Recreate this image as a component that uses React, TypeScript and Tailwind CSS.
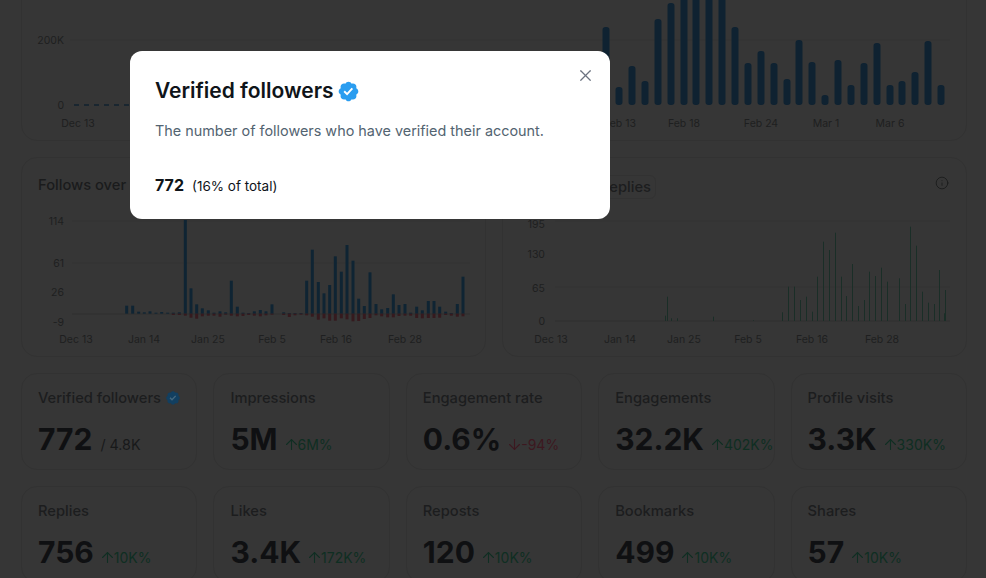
import { ArrowDown, ArrowUp, Info, X } from 'lucide-react'

const FONT = 'font-["Inter","Liberation_Sans",sans-serif]'

const overviewBars: [number, number][] = [
  [606, 27], [619, 87], [632, 66], [645, 81], [658, 19], [671, 3], [684, -10], [696, -10], [709, -10], [722, -10],
  [735, 27], [748, 63], [761, 51], [774, 63], [787, 79], [799, 40], [812, 62], [825, 95], [838, 60], [851, 85],
  [864, 63], [877, 43], [890, 85], [902, 81], [915, 72], [928, 41], [941, 85],
]

// x, top of blue bar, bottom of red bar (3x zoomed units)
const followBars: [number, number, number][] = [
  [380, 467, 491], [398, 467, 491], [416, 485, 491], [433, 487, 491], [450, 484, 491], [468, 488, 491], [485, 486, 491],
  [503, 488, 491], [520, 488, 495], [538, 487, 495], [556, 210, 497], [573, 415, 503], [590, 463, 506], [607, 475, 499],
  [625, 481, 497], [642, 488, 497], [660, 484, 500], [677, 487, 494], [694, 392, 497], [712, 470, 499], [729, 488, 498],
  [746, 489, 495], [763, 484, 497], [781, 480, 499], [798, 484, 496], [816, 463, 494], [851, 487, 495], [868, 489, 501],
  [885, 489, 496], [903, 489, 494], [920, 392, 496], [937, 299, 500], [955, 396, 509], [972, 430, 505], [989, 405, 512],
  [1006, 319, 512], [1024, 365, 505], [1041, 285, 508], [1059, 332, 514], [1076, 446, 513], [1093, 468, 507], [1110, 367, 504],
  [1128, 462, 496], [1145, 478, 499], [1163, 474, 502], [1180, 433, 502], [1197, 465, 498], [1215, 462, 497], [1232, 488, 497],
  [1250, 470, 504], [1267, 481, 505], [1285, 453, 504], [1302, 453, 504], [1319, 470, 503], [1337, 485, 495], [1354, 489, 497],
  [1372, 462, 500], [1389, 380, 499],
]

const replyBars: [number, number][] = [
  [510, 497], [515, 440], [527, 505], [547, 505], [654, 500], [774, 511], [862, 487], [880, 410], [897, 410], [915, 450],
  [932, 440], [950, 485], [967, 380], [984, 275], [1002, 300], [1019, 248], [1037, 380], [1054, 438], [1072, 342], [1089, 468],
  [1106, 450], [1123, 365], [1141, 378], [1159, 353], [1176, 395], [1211, 385], [1229, 462], [1246, 230], [1263, 287], [1281, 425],
  [1298, 458], [1316, 462], [1333, 360], [1346, 490], [1351, 420],
]

const statsTop = [
  { label: 'Verified followers', value: '772', total: '/ 4.8K', badge: true },
  { label: 'Impressions', value: '5M', delta: '6M%' },
  { label: 'Engagement rate', value: '0.6%', delta: '-94%', down: true },
  { label: 'Engagements', value: '32.2K', delta: '402K%' },
  { label: 'Profile visits', value: '3.3K', delta: '330K%' },
]

const statsBottom = [
  { label: 'Replies', value: '756', delta: '10K%' },
  { label: 'Likes', value: '3.4K', delta: '172K%' },
  { label: 'Reposts', value: '120', delta: '10K%' },
  { label: 'Bookmarks', value: '499', delta: '10K%' },
  { label: 'Shares', value: '57', delta: '10K%' },
]

function Badge({ size, color, check }: { size: number; color: string; check: string }) {
  return (
    <svg width={size} height={size} viewBox="0 0 24 24" className="shrink-0">
      <circle cx="12" cy="12" r="7" fill={check} />
      <path
        fill={color}
        fillRule="evenodd"
        d="M22.25 12c0-1.43-.88-2.67-2.19-3.34.46-1.39.2-2.9-.81-3.91s-2.52-1.27-3.91-.81c-.66-1.31-1.91-2.19-3.34-2.19s-2.67.88-3.33 2.19c-1.4-.46-2.91-.2-3.92.81s-1.26 2.52-.8 3.91c-1.31.67-2.2 1.91-2.2 3.34s.89 2.67 2.2 3.34c-.46 1.39-.21 2.9.8 3.91s2.52 1.26 3.91.81c.67 1.31 1.91 2.19 3.34 2.19s2.68-.88 3.34-2.19c1.39.45 2.9.2 3.91-.81s1.27-2.52.81-3.91c1.31-.67 2.19-1.91 2.19-3.34zm-11.71 4.2L6.8 12.46l1.41-1.42 2.26 2.26 4.8-5.23 1.47 1.36-6.2 6.77z"
      />
    </svg>
  )
}

function AxisText({ x, y, anchor = 'middle', children }: { x: number; y: number; anchor?: 'middle' | 'end'; children: string }) {
  return (
    <text x={x} y={y} textAnchor={anchor} dominantBaseline="central" fontSize="10.5" fill="#1e1f20" fontFamily="Inter, sans-serif">
      {children}
    </text>
  )
}

type Stat = { label: string; value: string; delta?: string; total?: string; down?: boolean; badge?: boolean }

function StatCard({ stat }: { stat: Stat }) {
  return (
    <div className="h-[97px] rounded-2xl border border-[#323232] px-4 pt-[14px]">
      <div className="flex items-center gap-[4px] text-[14.7px] leading-[20px] font-medium whitespace-nowrap text-[#1c1d1e]">
        {stat.label}
        {stat.badge && <Badge size={16} color="#123f60" check="#44687f" />}
      </div>
      <div className="mt-[11px] flex items-baseline gap-[8px] whitespace-nowrap">
        <span className="text-[30px] leading-[40px] font-bold text-[#0f1012]">{stat.value}</span>
        {stat.total && <span className="text-[14.3px] text-[#18191a]">{stat.total}</span>}
        {stat.delta && (
          <span className={`flex items-baseline text-[14px] ${stat.down ? 'text-[#3d1820]' : 'text-[#0f2e22]'}`}>
            {stat.down ? (
              <ArrowDown size={17} strokeWidth={1.5} className="-mr-[2px] -ml-[3px] self-center" />
            ) : (
              <ArrowUp size={17} strokeWidth={1.5} className="-mr-[2px] -ml-[3px] self-center" />
            )}
            {stat.delta}
          </span>
        )}
      </div>
    </div>
  )
}

export default function App() {
  return (
    <div className={`relative h-[578px] w-[986px] overflow-hidden bg-[#363636] ${FONT}`}>
      <div className="flex flex-col gap-[16px] pr-[19px] pl-[21px]">
        {/* Overview chart, scrolled partly out of view */}
        <div className="-mt-[20px] h-[161px] rounded-2xl border border-[#323232]">
          <svg width="944" height="159" viewBox="22 -19 944 159" className="block">
            <line x1="70" x2="950" y1="40" y2="40" stroke="#323232" />
            <line x1="74" x2="600" y1="105" y2="105" stroke="#10222f" strokeWidth="1.5" strokeDasharray="5 5" />
            <AxisText x={64} y={40} anchor="end">200K</AxisText>
            <AxisText x={64} y={105} anchor="end">0</AxisText>
            {overviewBars.map(([x, top]) => (
              <rect key={x} x={x - 3.5} y={top} width="7" height={105 - top} rx="3" fill="#0f2231" />
            ))}
            <AxisText x={78} y={123}>Dec 13</AxisText>
            <AxisText x={620} y={123}>Feb 13</AxisText>
            <AxisText x={684} y={123}>Feb 18</AxisText>
            <AxisText x={761} y={123}>Feb 24</AxisText>
            <AxisText x={826} y={123}>Mar 1</AxisText>
            <AxisText x={890} y={123}>Mar 6</AxisText>
          </svg>
        </div>

        {/* Follows and replies charts */}
        <div className="grid grid-cols-2 gap-4">
          <div className="relative h-[200px] rounded-2xl border border-[#323232]">
            <div className="px-4 pt-[17px] text-[14.7px] leading-[20px] font-medium whitespace-nowrap text-[#1a1b1c]">Follows over</div>
            <svg width="463" height="144" viewBox="22 212 463 144" className="absolute bottom-0 left-0 block">
              <line x1="72" x2="470" y1="221" y2="221" stroke="#323232" />
              <line x1="72" x2="470" y1="263" y2="263" stroke="#323232" />
              <line x1="72" x2="470" y1="314" y2="314" stroke="#2e2e2e" />
              <AxisText x={64} y={221} anchor="end">114</AxisText>
              <AxisText x={64} y={263} anchor="end">61</AxisText>
              <AxisText x={64} y={292} anchor="end">26</AxisText>
              <AxisText x={64} y={322} anchor="end">-9</AxisText>
              {followBars.map(([x, top, bottom]) => (
                <g key={x}>
                  <rect x={x / 3 - 1.5} y={150 + top / 3} width="3" height={(491 - top) / 3} fill="#0f2433" />
                  <rect x={x / 3 - 1.5} y={150 + 491 / 3} width="3" height={(bottom - 491) / 3} fill="#351a1e" />
                </g>
              ))}
              <AxisText x={76} y={339}>Dec 13</AxisText>
              <AxisText x={144} y={339}>Jan 14</AxisText>
              <AxisText x={208} y={339}>Jan 25</AxisText>
              <AxisText x={272} y={339}>Feb 5</AxisText>
              <AxisText x={336} y={339}>Feb 16</AxisText>
              <AxisText x={405} y={339}>Feb 28</AxisText>
            </svg>
          </div>

          <div className="relative h-[200px] rounded-2xl border border-[#323232]">
            <div className="flex items-start justify-between pt-[17px] pr-[17px] pl-[92px]">
              <span className="rounded-md border border-[#323232] px-[4px] text-[14.7px] leading-[22px] font-medium text-[#1c1d1e]">Replies</span>
              <Info size={14} strokeWidth={1.5} className="mt-[1px] text-[#1a1b1c]" />
            </div>
            <svg width="463" height="144" viewBox="503 212 463 144" className="absolute bottom-0 left-0 block">
              <line x1="555" x2="950" y1="221" y2="221" stroke="#323232" />
              <line x1="555" x2="950" y1="287" y2="287" stroke="#323232" />
              <line x1="555" x2="950" y1="321" y2="321" stroke="#2e2e2e" />
              <AxisText x={545} y={224} anchor="end">195</AxisText>
              <AxisText x={545} y={254} anchor="end">130</AxisText>
              <AxisText x={545} y={288} anchor="end">65</AxisText>
              <AxisText x={545} y={321} anchor="end">0</AxisText>
              {replyBars.map(([x, top]) => (
                <rect key={x} x={Math.round(495 + x / 3)} y={150 + top / 3} width="1" height={(513 - top) / 3} fill="#1a2e27" />
              ))}
              <AxisText x={551} y={339}>Dec 13</AxisText>
              <AxisText x={620} y={339}>Jan 14</AxisText>
              <AxisText x={684} y={339}>Jan 25</AxisText>
              <AxisText x={748} y={339}>Feb 5</AxisText>
              <AxisText x={812} y={339}>Feb 16</AxisText>
              <AxisText x={882} y={339}>Feb 28</AxisText>
            </svg>
          </div>
        </div>

        {/* Stat cards */}
        <div className="grid grid-cols-5 gap-4">
          {statsTop.map((stat) => <StatCard key={stat.label} stat={stat} />)}
          {statsBottom.map((stat) => <StatCard key={stat.label} stat={stat} />)}
        </div>
      </div>

      {/* Modal */}
      <div className="absolute top-[51px] left-[130px] h-[168px] w-[480px] rounded-xl bg-white px-[25px] pt-[26px]">
        <button className="absolute top-[15px] right-[15px] text-[#6b7280]">
          <X size={19} strokeWidth={1.5} />
        </button>
        <div className="flex items-center gap-[3px]">
          <h2 className="text-[21px] leading-[28px] font-semibold text-[#0f1419]">Verified followers</h2>
          <Badge size={23} color="#2a9df0" check="#ffffff" />
        </div>
        <p className="mt-[14px] text-[14.4px] leading-[24px] text-[#536471]">The number of followers who have verified their account.</p>
        <div className="mt-[30px] flex items-baseline gap-[8px]">
          <span className="text-base font-bold text-[#0f1419]">772</span>
          <span className="text-[13.5px] text-[#0f1419]">(16% of total)</span>
        </div>
      </div>
    </div>
  )
}
